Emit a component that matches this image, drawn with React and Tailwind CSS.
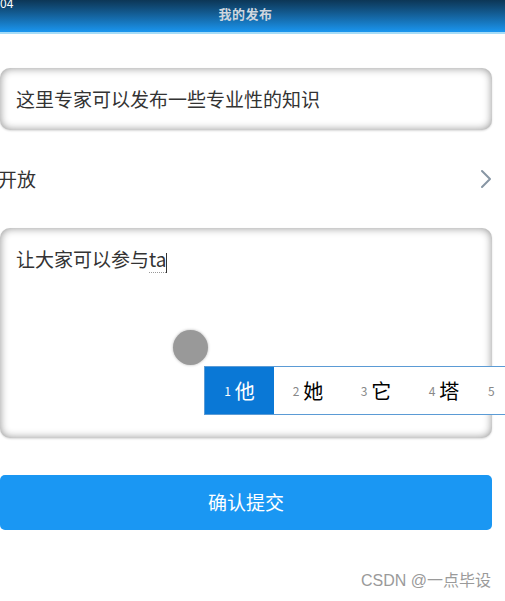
import React from 'react';

const font = { fontFamily: '"Noto Sans CJK SC", "Noto Sans", sans-serif' };

function Chevron() {
  return (
    <svg width="12" height="20" viewBox="0 0 12 20" fill="none">
      <path d="M2 2l8 8-8 8" stroke="#8796a4" strokeWidth="2" strokeLinecap="round" strokeLinejoin="round" />
    </svg>
  );
}

function Candidates() {
  const items = ['他', '她', '它', '塔'];
  return (
    <div className="absolute left-[204px] top-[366px] h-[49px] w-[310px] flex items-center bg-white border border-[#5b9bd5]">
      {items.map((c, i) => (
        <div
          key={c}
          className={
            i === 0
              ? 'h-full w-[69px] flex items-center justify-center gap-1 bg-[#0a78d6] text-white'
              : 'h-full w-[68px] flex items-center justify-center gap-1 text-black'
          }
        >
          <span className={i === 0 ? 'text-[12px] text-white' : 'text-[12px] text-[#888]'}>{i + 1}</span>
          <span className="text-[20px] leading-none">{c}</span>
        </div>
      ))}
      <div className="h-full flex items-center pl-[10px] text-[12px] text-[#888]">5</div>
    </div>
  );
}

export default function App() {
  return (
    <div className="relative w-[505px] h-[601px] bg-white overflow-hidden" style={font}>
      {/* top bar */}
      <div className="h-[32px] bg-gradient-to-b from-[#0c3656] to-[#1a96f0] flex items-center justify-center pb-[4px] pr-[14px]">
        <span className="text-[13px] font-bold tracking-[0.5px] text-[#cfd6de]">我的发布</span>
      </div>
      <div className="h-[2px] bg-[#a6dcf7]" />
      <span className="absolute left-0 top-[-6px] text-[12px] text-white">04</span>

      <div className="w-[492px] flex flex-col">
        <div className="mt-[34px] h-[62px] rounded-[10px] bg-white shadow-[inset_0_0_8px_rgba(0,0,0,0.45),0_1px_2px_rgba(0,0,0,0.15)] flex items-center pl-[16px]">
          <span className="text-[19px] text-[#333]">这里专家可以发布一些专业性的知识</span>
        </div>

        <div className="h-[98px] flex items-center justify-between -ml-[2px]">
          <span className="text-[19px] text-[#333]">开放</span>
          <Chevron />
        </div>

        <div className="h-[210px] rounded-[10px] bg-white shadow-[inset_0_0_8px_rgba(0,0,0,0.45),0_1px_2px_rgba(0,0,0,0.15)] pl-[16px] pt-[17px]">
          <span className="text-[19px] text-[#333]">让大家可以参与</span>
          <span className="text-[19px] text-[#333] border-b border-dotted border-[#999]">ta</span>
          <span className="inline-block w-px h-[20px] bg-[#333] align-middle" />
        </div>

        <button className="mt-[37px] h-[55px] rounded-[5px] bg-[#1a97f3] text-white text-[19px]">确认提交</button>
      </div>

      <div
        className="absolute right-[14px] bottom-[8px] text-[16px] text-[#9a9a9a]"
        style={{ fontFamily: '"Liberation Sans", "Noto Sans CJK SC", sans-serif' }}
      >
        CSDN @一点毕设
      </div>

      {/* touch indicator + IME candidates overlay */}
      <div className="absolute left-[173px] top-[330px] w-[35px] h-[35px] rounded-full bg-[#999] shadow-[0_0_3px_rgba(0,0,0,0.3)]" />
      <Candidates />
    </div>
  );
}
